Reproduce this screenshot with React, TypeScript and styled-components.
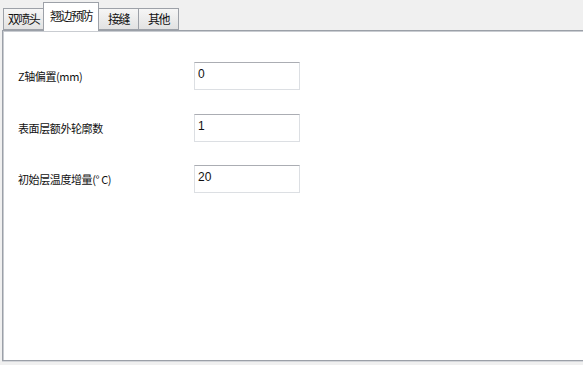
import React, { useState } from 'react';
import styled, { createGlobalStyle } from 'styled-components';

const GlobalStyle = createGlobalStyle`
  html, body {
    margin: 0;
    padding: 0;
    background: #f0f0f0;
  }
  body {
    font-family: 'Noto Sans CJK SC', 'Liberation Sans', sans-serif;
    color: #1a1a1a;
  }
`;

const Window = styled.div`
  width: 583px;
  height: 365px;
  overflow: hidden;
  background: #f0f0f0;
  padding-left: 2px;
  box-sizing: border-box;
`;

const TabBar = styled.div`
  display: flex;
  align-items: flex-end;
  height: 30px;
  padding-left: 1px;
  position: relative;
  z-index: 1;
`;

const Tab = styled.div<{ $active?: boolean; $width: number }>`
  box-sizing: border-box;
  width: ${(p) => p.$width}px;
  height: ${(p) => (p.$active ? '29px' : '22px')};
  margin-bottom: ${(p) => (p.$active ? '-1px' : '0')};
  padding-top: ${(p) => (p.$active ? '5px' : '2px')};
  border: 1px solid #9da1a8;
  border-bottom: ${(p) => (p.$active ? 'none' : '1px solid #9da1a8')};
  background: ${(p) =>
    p.$active ? '#ffffff' : 'linear-gradient(#f6f6f6, #e2e2e2)'};
  font-size: 12px;
  line-height: 16px;
  letter-spacing: -1.5px;
  text-align: center;
  color: #111;
  cursor: default;
  white-space: nowrap;
  & + & {
    margin-left: -1px;
  }
`;

const Panel = styled.div`
  box-sizing: border-box;
  width: 600px;
  height: 331px;
  background: #ffffff;
  border: 1px solid #9ba0a8;
  box-shadow: inset 1px 1px 0 #c9ccd1, 0 1px 0 #d4d6da;
  padding: 31px 0 0 15px;
`;

const Form = styled.div`
  display: grid;
  grid-template-columns: 176px 106px;
  grid-auto-rows: 28px;
  row-gap: 23.5px;
  align-items: center;
`;

const Label = styled.label`
  font-size: 11px;
  letter-spacing: -0.4px;
  color: #111;
  white-space: nowrap;
`;

const Input = styled.input`
  box-sizing: border-box;
  width: 106px;
  height: 28px;
  border: 1px solid #dcdfe3;
  border-top-color: #abadb3;
  padding: 0 0 4px 3px;
  font-family: 'Liberation Sans', sans-serif;
  font-size: 12px;
  color: #111;
  outline: none;
  background: #fff;
`;

const tabs = [
  { name: '双喷头', width: 41 },
  { name: '翘边预防', width: 56 },
  { name: '接缝', width: 41 },
  { name: '其他', width: 41 },
];

const fields = [
  { label: 'Z轴偏置(mm)', value: '0' },
  { label: '表面层额外轮廓数', value: '1' },
  { label: '初始层温度增量(° C)', value: '20' },
];

export default function App() {
  const [active, setActive] = useState(1);
  return (
    <Window>
      <GlobalStyle />
      <TabBar>
        {tabs.map((t, i) => (
          <Tab
            key={t.name}
            $width={t.width}
            $active={i === active}
            onClick={() => setActive(i)}
          >
            {t.name}
          </Tab>
        ))}
      </TabBar>
      <Panel>
        <Form>
          {fields.map((f) => (
            <React.Fragment key={f.label}>
              <Label>{f.label}</Label>
              <Input defaultValue={f.value} />
            </React.Fragment>
          ))}
        </Form>
      </Panel>
    </Window>
  );
}
